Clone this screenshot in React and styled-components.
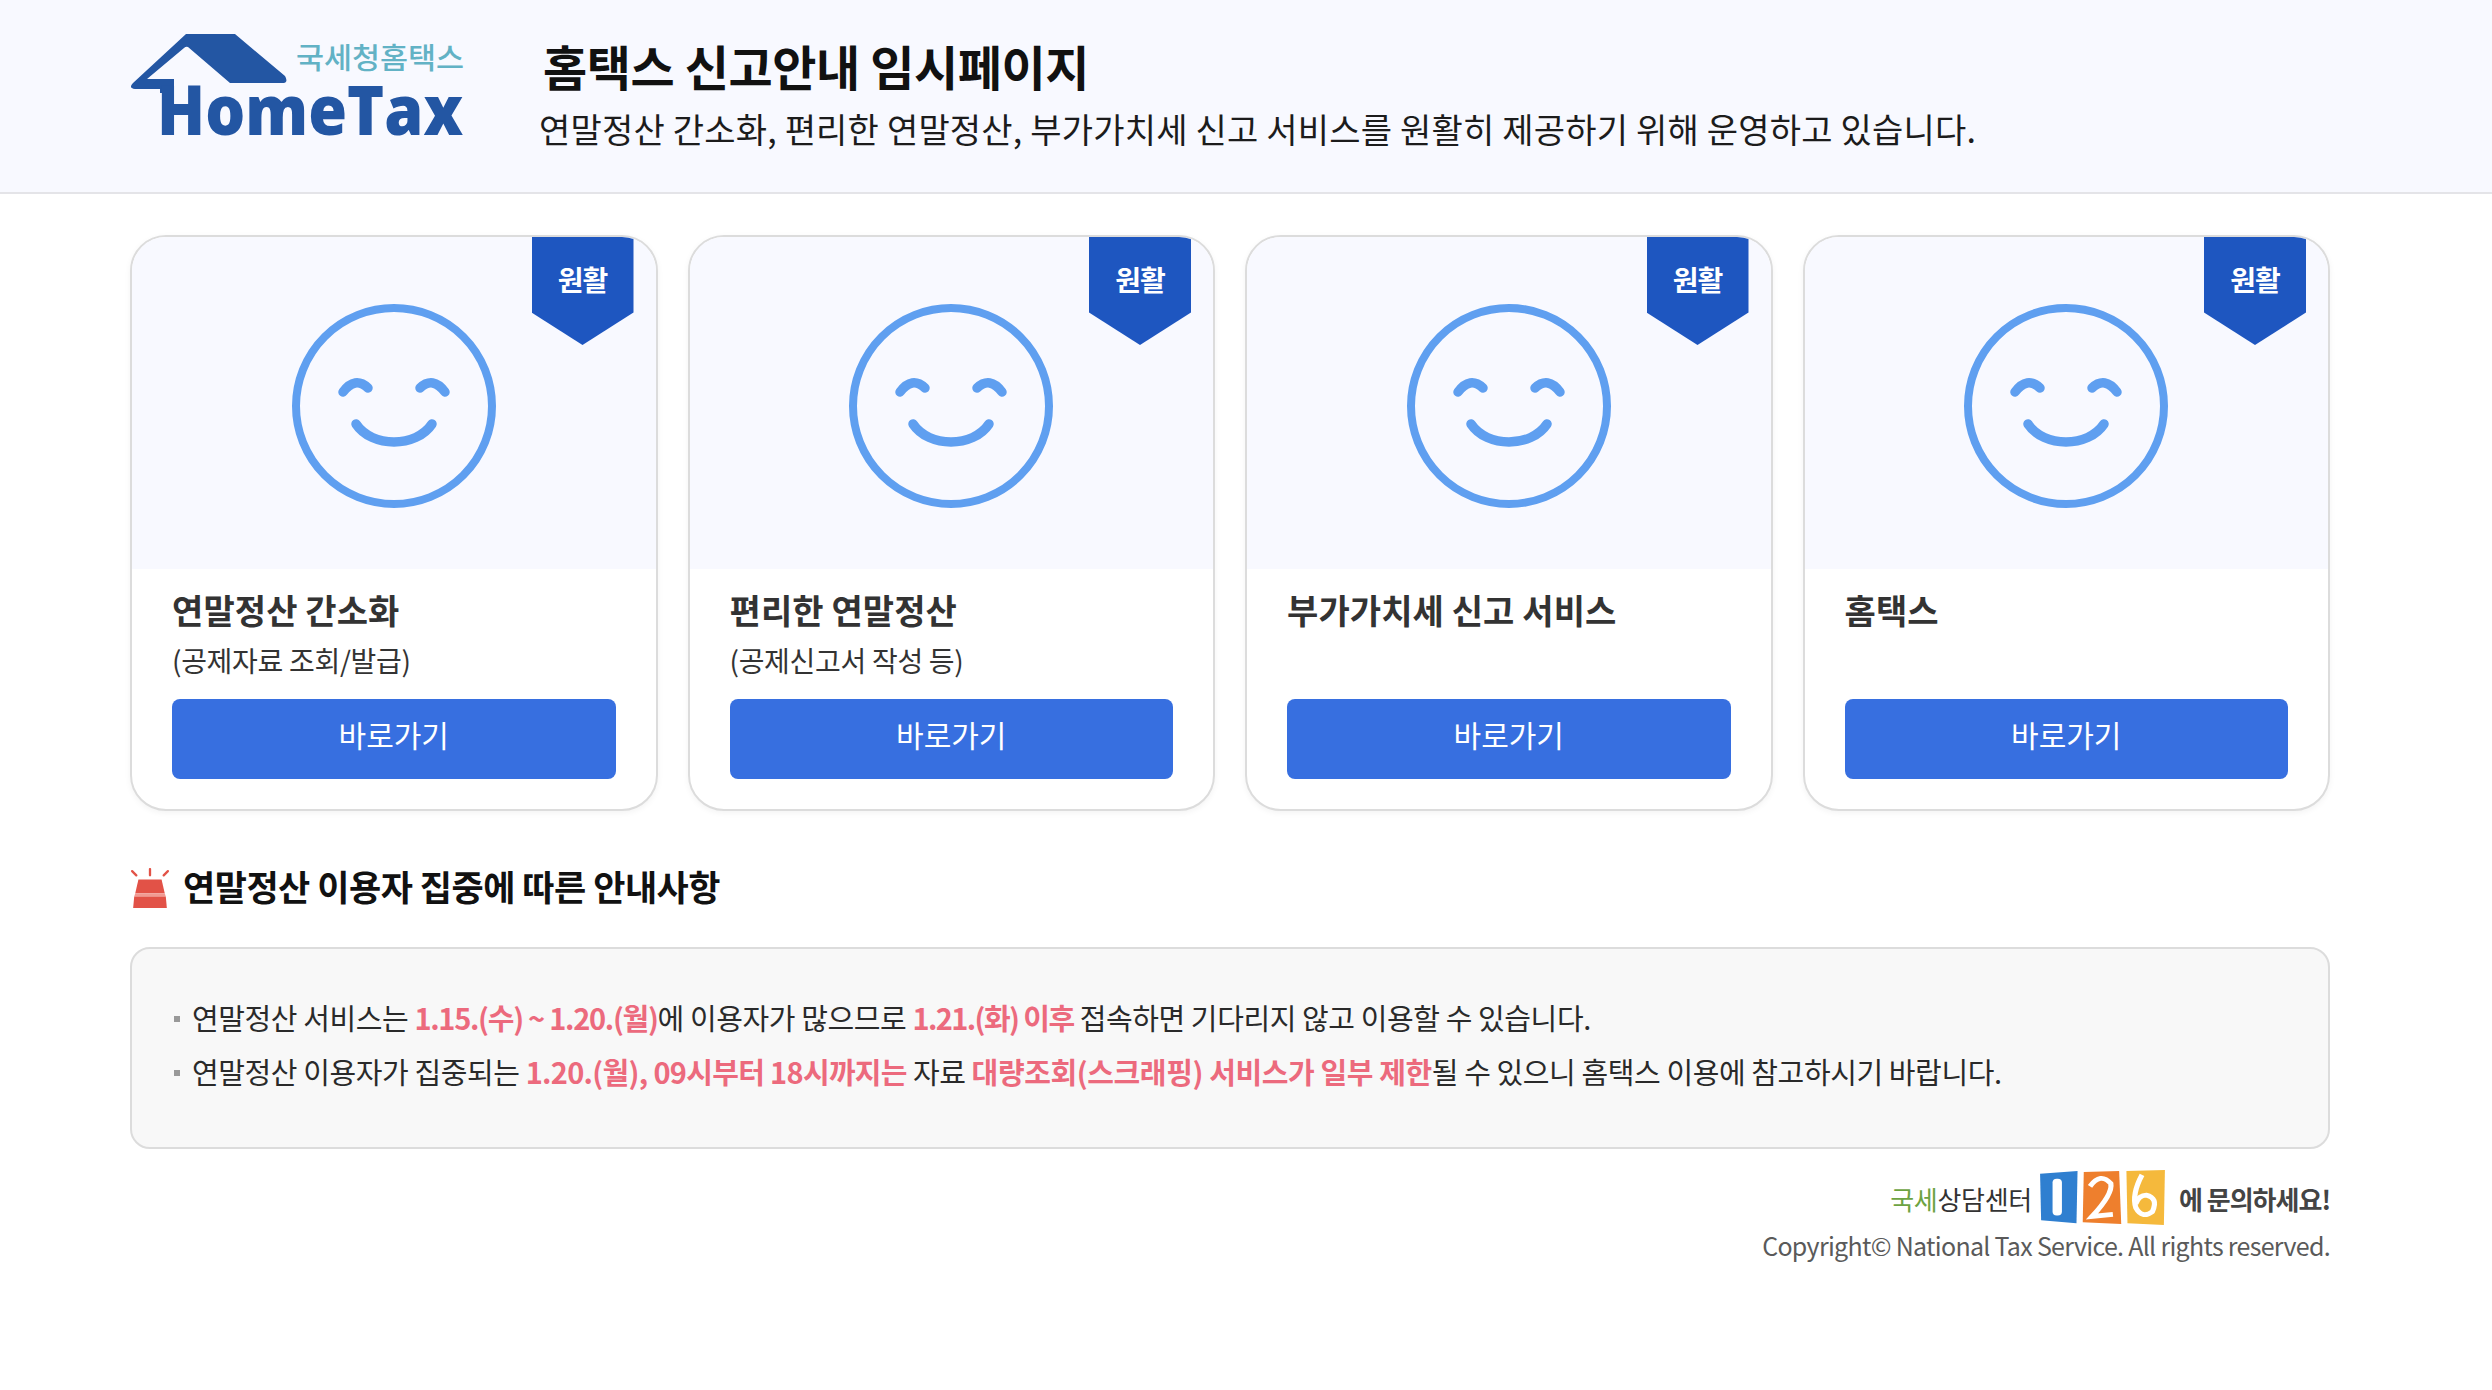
import React from "react";
import styled, { createGlobalStyle } from "styled-components";

const GlobalStyle = createGlobalStyle`
  html, body {
    margin: 0;
    padding: 0;
    background: #fff;
    font-family: "Noto Sans CJK KR", "Noto Sans", sans-serif;
    color: #222;
  }
`;

const cards = [
  { title: "연말정산 간소화", sub: "(공제자료 조회/발급)" },
  { title: "편리한 연말정산", sub: "(공제신고서 작성 등)" },
  { title: "부가가치세 신고 서비스", sub: "" },
  { title: "홈택스", sub: "" },
];

const HomeTaxLogo = () => (
  <LogoSvg viewBox="0 0 335 122" width="335" height="122">
    <path
      d="M3 50 L56 1 L105 1 L155 43 Q159 50 152 50 L100 50 L58 14 Q56 13 54 15 L17 46 L44 46 L44 60 L30 60 L30 56 L5 56 Q-2 55 3 50 Z"
      fill="#2356a3"
    />
    <text
      x="27"
      y="102"
      fontFamily="Open Sans, Noto Sans, sans-serif"
      fontWeight="800"
      fontSize="69"
      fill="#2356a3"
      textLength="306"
      lengthAdjust="spacingAndGlyphs"
    >
      HomeTax
    </text>
    <text
      x="166"
      y="36"
      fontFamily="Noto Sans CJK KR, sans-serif"
      fontWeight="500"
      fontSize="29"
      fill="#62b2c5"
      textLength="168"
      lengthAdjust="spacingAndGlyphs"
    >
      국세청홈택스
    </text>
  </LogoSvg>
);

const Smile = () => (
  <svg viewBox="0 0 204 204" width="204" height="204" fill="none" stroke="#5f9ff0" strokeLinecap="round">
    <circle cx="102" cy="102" r="98" strokeWidth="8" />
    <path d="M51 88 Q63 72 76 84" strokeWidth="9.5" />
    <path d="M128 84 Q141 72 153 88" strokeWidth="9.5" />
    <path d="M64 120 C80 144 124 144 140 120" strokeWidth="9.5" />
  </svg>
);

const SirenIcon = () => (
  <SirenSvg viewBox="0 0 38 38" width="40" height="40">
    <path d="M8 11 H30 L33 24 H5 Z" fill="#e25247" />
    <path d="M5 24 H33 L34 27 H4 Z" fill="#f19a92" />
    <path d="M4 27 H34 L35 38 H3 Z" fill="#e25247" />
    <g stroke="#e25247" strokeWidth="2.2" strokeLinecap="round">
      <path d="M19 1 V7" />
      <path d="M2 3 L6 7" />
      <path d="M36 3 L32 7" />
    </g>
  </SirenSvg>
);

const CounselLogo = () => (
  <svg viewBox="0 0 124 60" width="129" height="58" preserveAspectRatio="none">
    <path d="M2 5 L38 2 L37 56 L3 53 Z" fill="#2f7fd0" />
    <rect x="14" y="10" width="9" height="38" rx="4" fill="#fff" />
    <path d="M44 3 L78 2 L80 57 L43 55 Z" fill="#ee7f2d" />
    <path d="M50 18 Q60 3 70 15 Q72 26 52 49 L72 47" fill="none" stroke="#fff" strokeWidth="5" />
    <path d="M85 2 L122 1 L121 58 L86 56 Z" fill="#f5b93c" />
    <path d="M100 6 Q90 26 94 40 Q100 52 110 44 Q116 30 104 27 Q97 27 94 36" fill="none" stroke="#fff" strokeWidth="5" />
  </svg>
);

const App = () => (
  <>
    <GlobalStyle />
    <Header>
      <HomeTaxLogo />
      <HeaderText>
        <PageTitle>홈택스 신고안내 임시페이지</PageTitle>
        <PageDesc>연말정산 간소화, 편리한 연말정산, 부가가치세 신고 서비스를 원활히 제공하기 위해 운영하고 있습니다.</PageDesc>
      </HeaderText>
    </Header>
    <Main>
      <CardGrid>
        {cards.map((card) => (
          <Card key={card.title}>
            <CardVisual>
              <Smile />
              <Badge>원활</Badge>
            </CardVisual>
            <CardBody>
              <CardTitle>{card.title}</CardTitle>
              <CardSub>{card.sub}</CardSub>
              <GoButton>바로가기</GoButton>
            </CardBody>
          </Card>
        ))}
      </CardGrid>
      <NoticeTitle>
        <SirenIcon />
        연말정산 이용자 집중에 따른 안내사항
      </NoticeTitle>
      <NoticeBox>
        <NoticeItem>
          연말정산 서비스는 <Em $spacing={-1.3}>1.15.(수) ~ 1.20.(월)</Em>에 이용자가 많으므로 <Em $spacing={-1.6}>1.21.(화) 이후</Em> 접속하면 기다리지 않고 이용할 수 있습니다.
        </NoticeItem>
        <NoticeItem>
          연말정산 이용자가 집중되는 <Em $spacing={-0.7}>1.20.(월), 09시부터 18시까지는</Em> 자료 <Em $spacing={-0.4}>대량조회(스크래핑) 서비스가 일부 제한</Em>될 수 있으니 홈택스 이용에 참고하시기 바랍니다.
        </NoticeItem>
      </NoticeBox>
      <Footer>
        <CounselRow>
          <CounselName>
            <Green>국세</Green>상담센터
          </CounselName>
          <CounselLogo />
          <CounselAsk>에 문의하세요!</CounselAsk>
        </CounselRow>
        <Copyright>Copyright© National Tax Service. All rights reserved.</Copyright>
      </Footer>
    </Main>
  </>
);

export default App;

const Header = styled.header`
  display: flex;
  align-items: flex-start;
  height: 192px;
  padding-left: 130px;
  background: #f8f9ff;
  border-bottom: 2px solid #e4e4e8;
`;

const LogoSvg = styled.svg`
  margin-top: 33px;
  flex: none;
  overflow: visible;
`;

const SirenSvg = styled.svg`
  flex: none;
  margin-top: 4px;
`;

const HeaderText = styled.div`
  margin-left: 78px;
  padding-top: 35px;
`;

const PageTitle = styled.h1`
  margin: 0;
  font-size: 48px;
  line-height: 60px;
  font-weight: 700;
  color: #111;
  letter-spacing: -0.4px;
`;

const PageDesc = styled.p`
  margin: 11px 0 0 -4px;
  font-size: 34px;
  line-height: 46px;
  font-weight: 400;
  color: #1c1c1c;
  letter-spacing: 0.2px;
`;

const Main = styled.main`
  width: 2200px;
  margin-left: 130px;
  padding-top: 41px;
`;

const CardGrid = styled.div`
  display: grid;
  grid-template-columns: repeat(4, 1fr);
  gap: 30px;
`;

const Card = styled.div`
  height: 576px;
  box-sizing: border-box;
  border: 2px solid #dcdcdc;
  border-radius: 36px;
  background: #fff;
  overflow: hidden;
  box-shadow: 0 2px 6px rgba(0, 0, 0, 0.05);
`;

const CardVisual = styled.div`
  position: relative;
  height: 332px;
  padding-top: 6px;
  box-sizing: border-box;
  display: flex;
  align-items: center;
  justify-content: center;
  background: #f8f9ff;
`;

const Badge = styled.div`
  position: absolute;
  top: 0;
  right: 22px;
  width: 102px;
  height: 108px;
  padding-top: 24px;
  box-sizing: border-box;
  background: #1e56c0;
  clip-path: polygon(0 0, 100% 0, 100% 70%, 50% 100%, 0 70%);
  color: #fff;
  font-size: 28px;
  line-height: 36px;
  font-weight: 700;
  text-align: center;
  letter-spacing: -1px;
`;

const CardBody = styled.div`
  padding: 16px 40px 0;
`;

const CardTitle = styled.h3`
  margin: 0 0 1px;
  font-size: 34px;
  line-height: 50px;
  font-weight: 700;
  color: #333;
  letter-spacing: 0.1px;
`;

const CardSub = styled.p`
  margin: 0 0 15px;
  height: 48px;
  font-size: 28px;
  line-height: 48px;
  color: #333;
  letter-spacing: -0.3px;
`;

const GoButton = styled.button`
  display: block;
  width: 100%;
  height: 80px;
  padding: 0 0 10px;
  border: none;
  border-radius: 8px;
  background: #376fe0;
  color: #fff;
  font-family: inherit;
  font-size: 30px;
  font-weight: 400;
`;

const NoticeTitle = styled.h2`
  display: flex;
  align-items: center;
  gap: 13px;
  margin: 46px 0 32px;
  height: 58px;
  font-size: 35px;
  line-height: 58px;
  font-weight: 700;
  color: #111;
  letter-spacing: -0.5px;
`;

const NoticeBox = styled.ul`
  list-style: none;
  margin: 0;
  padding: 41px 40px 0 60px;
  height: 202px;
  box-sizing: border-box;
  border: 2px solid #dcdcdc;
  border-radius: 20px;
  background: #f8f8f8;
`;

const NoticeItem = styled.li`
  position: relative;
  font-size: 29px;
  line-height: 54px;
  color: #2a2a2a;
  letter-spacing: -0.4px;

  &::before {
    content: "";
    position: absolute;
    left: -18px;
    top: 26px;
    width: 6px;
    height: 6px;
    background: #999;
  }
`;

const Em = styled.span`
  color: #ec6a7d;
  font-weight: 700;
  letter-spacing: ${(props) => props.$spacing}px;
`;

const Footer = styled.footer`
  display: flex;
  flex-direction: column;
  align-items: flex-end;
  padding-top: 20px;
`;

const CounselRow = styled.div`
  display: flex;
  align-items: center;
  height: 58px;
`;

const CounselName = styled.span`
  margin-right: 6px;
  font-size: 26px;
  color: #333;
  letter-spacing: -0.3px;
`;

const Green = styled.span`
  color: #6da342;
`;

const CounselAsk = styled.span`
  margin-left: 12px;
  font-size: 26px;
  font-weight: 700;
  color: #444;
  letter-spacing: -1px;
`;

const Copyright = styled.div`
  font-size: 25px;
  line-height: 36px;
  color: #5a5a5a;
  letter-spacing: -0.7px;
`;
